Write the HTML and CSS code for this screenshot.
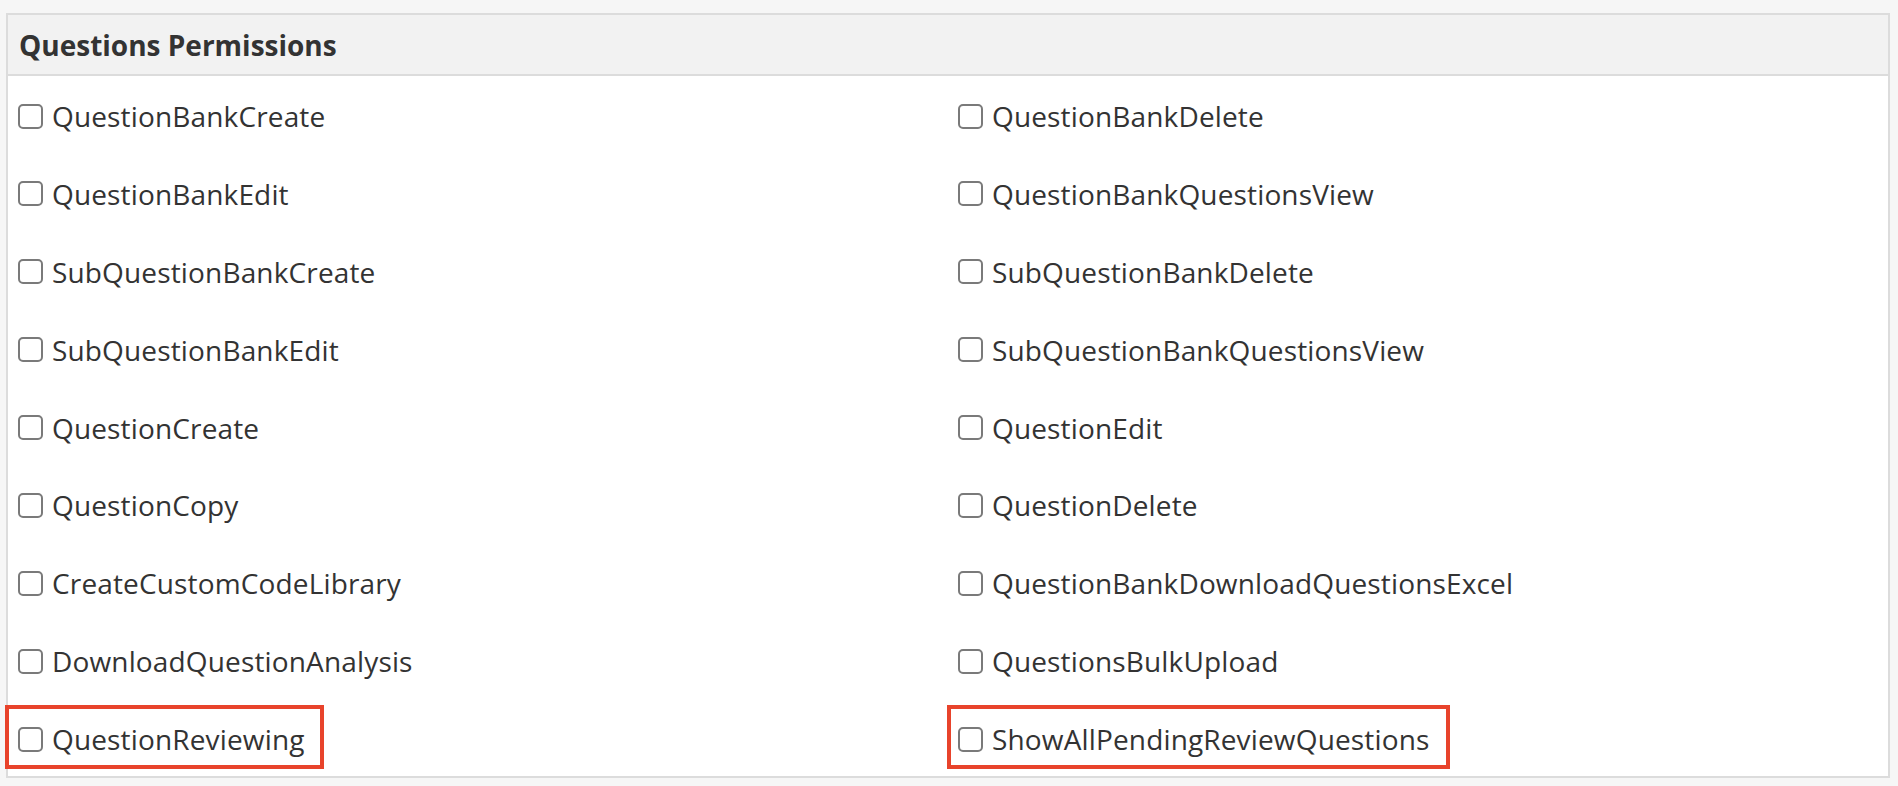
FILE: index.html
```html
<!DOCTYPE html>
<html lang="en">
<head>
<meta charset="utf-8">
<title>Questions Permissions</title>
<link rel="stylesheet" href="styles.css">
</head>
<body>
<section class="panel">
  <header class="panel-head">Questions Permissions</header>
  <div class="panel-body">
    <label class="perm"><input type="checkbox"><span>QuestionBankCreate</span></label>
    <label class="perm"><input type="checkbox"><span>QuestionBankDelete</span></label>
    <label class="perm"><input type="checkbox"><span>QuestionBankEdit</span></label>
    <label class="perm"><input type="checkbox"><span>QuestionBankQuestionsView</span></label>
    <label class="perm"><input type="checkbox"><span>SubQuestionBankCreate</span></label>
    <label class="perm"><input type="checkbox"><span>SubQuestionBankDelete</span></label>
    <label class="perm"><input type="checkbox"><span>SubQuestionBankEdit</span></label>
    <label class="perm"><input type="checkbox"><span>SubQuestionBankQuestionsView</span></label>
    <label class="perm"><input type="checkbox"><span>QuestionCreate</span></label>
    <label class="perm"><input type="checkbox"><span>QuestionEdit</span></label>
    <label class="perm"><input type="checkbox"><span>QuestionCopy</span></label>
    <label class="perm"><input type="checkbox"><span>QuestionDelete</span></label>
    <label class="perm"><input type="checkbox"><span>CreateCustomCodeLibrary</span></label>
    <label class="perm"><input type="checkbox"><span>QuestionBankDownloadQuestionsExcel</span></label>
    <label class="perm"><input type="checkbox"><span>DownloadQuestionAnalysis</span></label>
    <label class="perm"><input type="checkbox"><span>QuestionsBulkUpload</span></label>
    <label class="perm highlight"><input type="checkbox"><span>QuestionReviewing</span></label>
    <label class="perm highlight highlight-right"><input type="checkbox"><span>ShowAllPendingReviewQuestions</span></label>
  </div>
</section>
</body>
</html>
```

FILE: styles.css
```css
html, body {
  margin: 0;
  padding: 0;
  background: #f6f6f6;
}

body {
  font-family: "Open Sans", "Noto Sans", sans-serif;
  color: #333333;
  padding: 13px 8px 8px 6px;
}

.panel {
  border: 2px solid #dcdcdc;
  background: #ffffff;
}

.panel-head {
  background: #f2f2f2;
  border-bottom: 2px solid #dcdcdc;
  height: 59px;
  display: flex;
  align-items: center;
  padding-left: 11px;
  font-size: 28px;
  font-weight: 700;
  color: #333333;
}

.panel-body {
  display: grid;
  grid-template-columns: 1fr 1fr;
  row-gap: 37.875px;
  padding: 20px 0 17px 0;
}

.perm {
  justify-self: start;
  margin-left: 10px;
  position: relative;
  display: inline-flex;
  align-items: center;
  height: 40px;
  font-size: 28px;
  letter-spacing: 0.15px;
  color: #333333;
  cursor: pointer;
}

.perm input {
  appearance: none;
  -webkit-appearance: none;
  margin: 0 9px 0 0;
  width: 25px;
  height: 25px;
  border: 2px solid #7a7a7a;
  border-radius: 5px;
  background: #ffffff;
  flex: none;
}

.highlight::after {
  content: "";
  position: absolute;
  left: -13px;
  right: -19px;
  top: -14px;
  bottom: -10px;
  border: 4px solid #e8432b;
  pointer-events: none;
}

.highlight-right::after {
  left: -11px;
  right: -21px;
}
```
